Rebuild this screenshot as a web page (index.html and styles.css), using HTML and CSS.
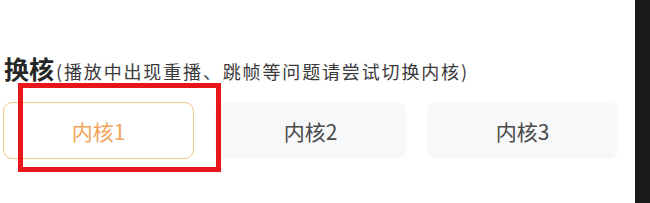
FILE: index.html
```html
<!DOCTYPE html>
<html lang="zh-CN">
<head>
<meta charset="utf-8">
<link rel="stylesheet" href="styles.css">
</head>
<body>
<div class="screen">
  <div class="panel">
    <div class="section">
      <div class="section-head">
        <span class="section-title">换核</span>
        <span class="section-note">(播放中出现重播、跳帧等问题请尝试切换内核)</span>
      </div>
      <div class="options">
        <div class="option option-active">内核1</div>
        <div class="option">内核2</div>
        <div class="option">内核3</div>
      </div>
    </div>
    <div class="highlight"></div>
  </div>
  <div class="edge"></div>
</div>
</body>
</html>
```

FILE: styles.css
```css
* { box-sizing: border-box; }
html, body { margin: 0; padding: 0; background: #ffffff; }
body {
  font-family: "Noto Sans CJK SC", "Noto Sans", sans-serif;
  width: 650px;
  height: 203px;
  overflow: hidden;
}
.screen {
  display: flex;
  width: 650px;
  height: 203px;
}
.panel {
  position: relative;
  flex: 1;
  padding: 51px 0 0 4px;
  overflow: hidden;
}
.edge {
  width: 15px;
  background: #1b1b1b;
}
.section-head {
  display: flex;
  align-items: baseline;
  height: 34px;
}
.section-title {
  font-size: 25px;
  font-weight: 700;
  color: #262626;
  line-height: 34px;
  margin-right: 2px;
}
.section-note {
  font-size: 18px;
  color: #3a3a3a;
  letter-spacing: 1.85px;
  line-height: 34px;
}
.options {
  display: flex;
  gap: 21px;
  margin-top: 17px;
  margin-left: -1px;
}
.option {
  width: 191px;
  height: 57px;
  border-radius: 9px;
  background: #f7f8fa;
  display: flex;
  align-items: center;
  justify-content: center;
  font-size: 21px;
  color: #4a4a4a;
}
.option-active {
  background: #ffffff;
  border: 1.5px solid #f0c48a;
  color: #f2a45c;
}
.highlight {
  position: absolute;
  left: 18px;
  top: 83px;
  width: 203px;
  height: 89px;
  border: 5px solid #e8151b;
}
```
